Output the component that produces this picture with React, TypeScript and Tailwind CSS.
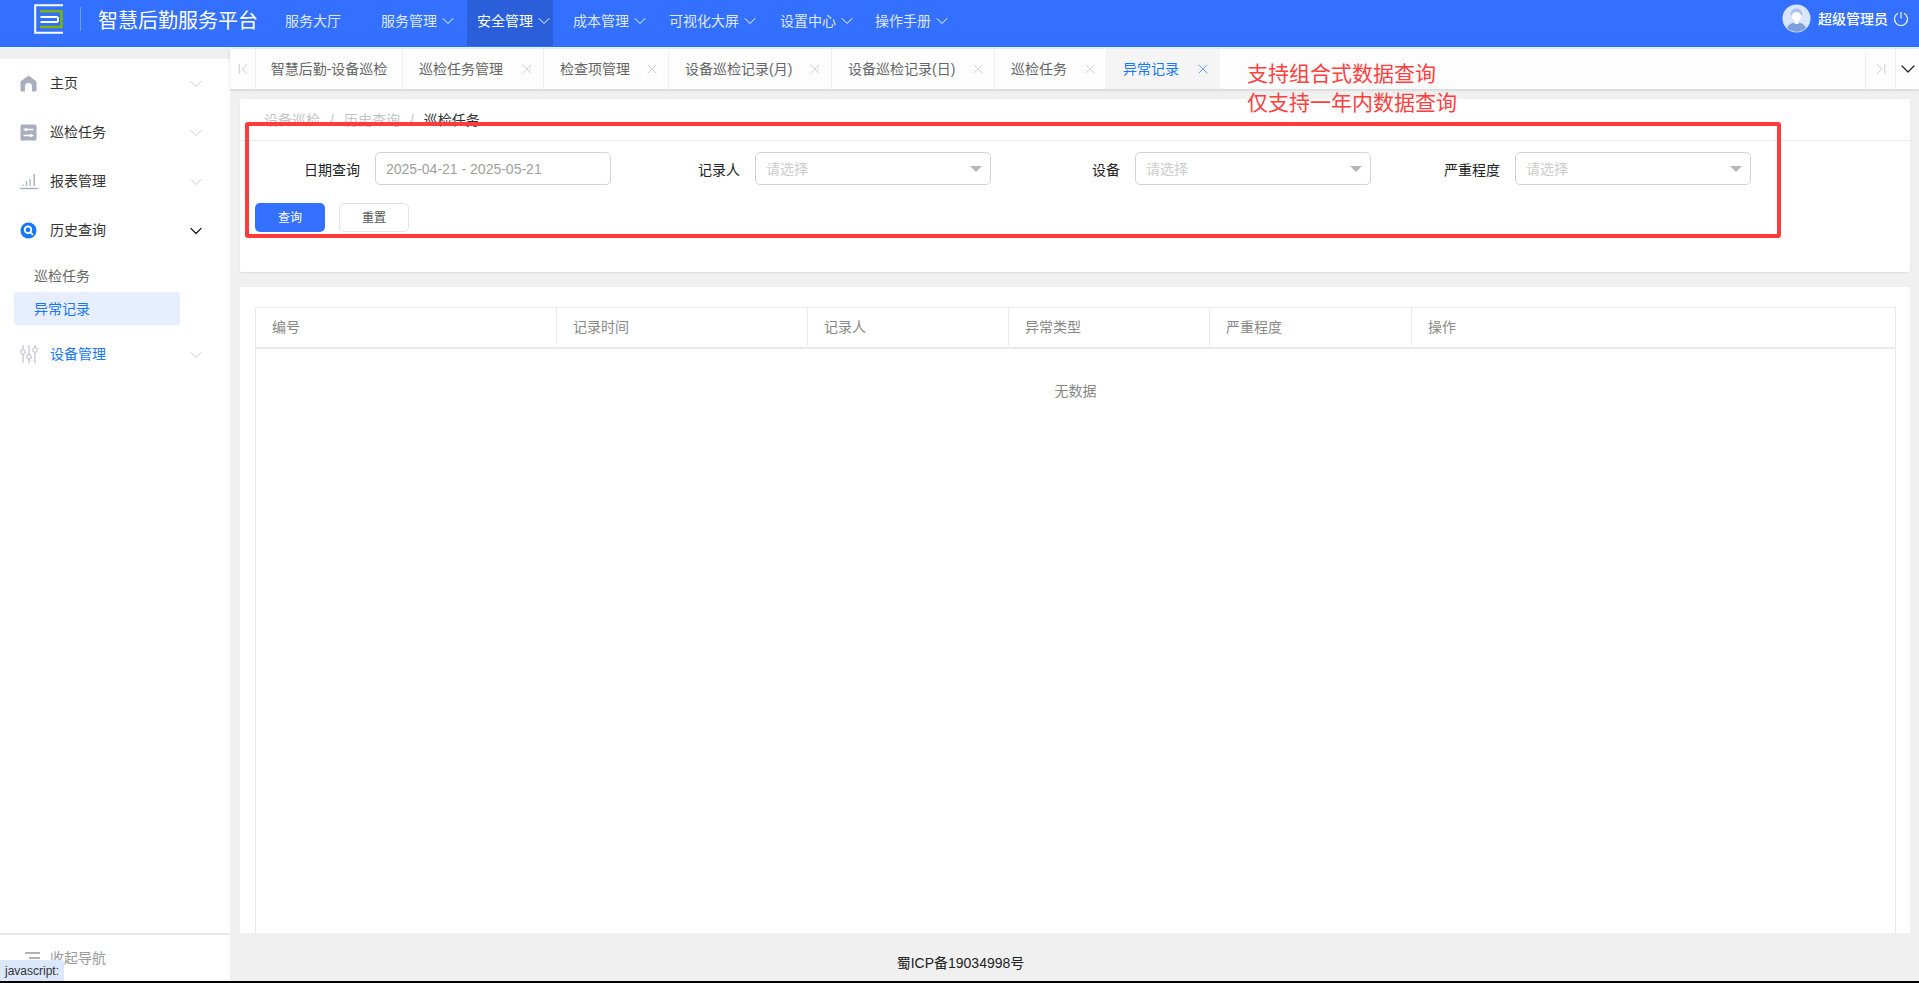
import { ChevronDown, ChevronFirst, ChevronLast, X } from "lucide-react";

const navItems = [
  { label: "服务大厅", box: "w-[96px]", arrow: false, active: false },
  { label: "服务管理", box: "w-[86px]", arrow: true, active: false },
  { label: "安全管理", box: "w-[86px] pl-[10px]", arrow: true, active: true },
  { label: "成本管理", box: "w-[116px] pl-[20px]", arrow: true, active: false },
  { label: "可视化大屏", box: "w-[111px]", arrow: true, active: false },
  { label: "设置中心", box: "w-[95px]", arrow: true, active: false },
  { label: "操作手册", box: "w-[96px]", arrow: true, active: false },
];

const tabs = [
  { label: "巡检任务管理", width: "w-[141px]" },
  { label: "检查项管理", width: "w-[125px]" },
  { label: "设备巡检记录(月)", width: "w-[163px]" },
  { label: "设备巡检记录(日)", width: "w-[163px]" },
  { label: "巡检任务", width: "w-[112px]" },
];

const filters = [
  { label: "日期查询", value: "2025-04-21 - 2025-05-21" },
  { label: "记录人" },
  { label: "设备" },
  { label: "严重程度" },
];

const columns = ["编号", "记录时间", "记录人", "异常类型", "严重程度", "操作"];

function Logo() {
  return (
    <svg width="30" height="30" viewBox="0 0 30 30" fill="none" className="ml-[34px] mt-[4px] shrink-0 self-start">
      <path d="M29 1.200H1.200V28.800H29" stroke="#fff" strokeWidth="2" />
      <path d="M6 7.200H27.500V23H6" stroke="#7cb305" strokeWidth="2.600" />
      <path d="M24 13H6.500M24 18H6.500M24 13V18" stroke="#fff" strokeWidth="1.800" />
    </svg>
  );
}

function Avatar() {
  return (
    <svg width="29" height="29" viewBox="0 0 29 29" className="shrink-0">
      <circle cx="14.5" cy="14.5" r="14" fill="#d9e5fb" />
      <path d="M5 24c1.5-4 5-5.5 9.5-5.5S22.500 20 24 24a14 14 0 0 1-19 0Z" fill="#7d9fdc" />
      <path d="M8.500 11c0-4 2.500-6.500 6-6.500s6 2.500 6 6.500h-1.500c0-1-9-1-9 0Z" fill="#a9c0ea" />
      <circle cx="14.500" cy="12.500" r="4.500" fill="#fff" />
      <rect x="12.500" y="15" width="4" height="5" fill="#fff" />
    </svg>
  );
}

function PowerIcon() {
  return (
    <svg width="16" height="16" viewBox="0 0 16 16" fill="none" stroke="#fff" strokeWidth="1.100" className="ml-[5px] shrink-0">
      <path d="M5 2.300a6.500 6.500 0 1 0 6 0" />
      <path d="M8 1v6.500" />
    </svg>
  );
}

function HomeIcon() {
  return (
    <svg width="17" height="17" viewBox="0 0 17 17" className="shrink-0">
      <path d="M8.500 0.500 16.500 6.500V15.500a1 1 0 0 1-1 1H12V11.500a3.500 3.500 0 0 0-7 0V16.500H1.500a1 1 0 0 1-1-1V6.500Z" fill="#a9aebf" />
    </svg>
  );
}

function TaskIcon() {
  return (
    <svg width="17" height="17" viewBox="0 0 17 17" className="shrink-0">
      <rect x="0.500" y="0.500" width="16" height="16" rx="1.500" fill="#a9aebf" />
      <path d="M3.500 5.500h10M3.500 11.500h10" stroke="#fff" strokeWidth="1.300" />
      <circle cx="6" cy="5.500" r="1.500" fill="#fff" />
      <circle cx="11" cy="11.500" r="1.500" fill="#fff" />
    </svg>
  );
}

function ReportIcon() {
  return (
    <svg width="18" height="17" viewBox="0 0 18 17" className="shrink-0">
      <path d="M0 15.500h18" stroke="#a9aebf" strokeWidth="1.400" />
      <path d="M2.500 13h1.200v-1.500H2.500ZM6 13h1.200V8H6ZM9.500 13h1.200V6H9.500ZM13.500 13h1.400V1h-1.400Z" fill="#a9aebf" />
    </svg>
  );
}

function SearchIcon() {
  return (
    <svg width="17" height="17" viewBox="0 0 17 17" className="shrink-0">
      <circle cx="8.500" cy="8.500" r="8" fill="#1677ff" />
      <circle cx="8" cy="7.800" r="3.300" fill="none" stroke="#fff" strokeWidth="1.800" />
      <path d="M10.500 10.300 13 12.800" stroke="#fff" strokeWidth="1.800" />
    </svg>
  );
}

function DeviceIcon() {
  return (
    <svg width="18" height="18" viewBox="0 0 18 18" fill="none" stroke="#a9aebf" strokeWidth="0.900" className="shrink-0">
      <path d="M3 0v4.500M3 9v9M9 0v9.500M9 14v4M15 0v2.500M15 7.500V18" />
      <circle cx="3" cy="7" r="2.300" />
      <circle cx="9" cy="11.800" r="2.300" />
      <circle cx="15" cy="5" r="2.300" />
    </svg>
  );
}

function MenuRow({ icon, label, blue, open }: { icon: React.ReactNode; label: string; blue?: boolean; open?: boolean }) {
  return (
    <div className="flex h-[49px] items-center pl-[20px] pr-[24px]">
      <span className="flex w-[30px] shrink-0 items-center pb-px">{icon}</span>
      <span className={`flex-1 pb-[2px] text-sm ${blue ? "text-[#1677ff]" : "text-[#333]"}`}>{label}</span>
      <ChevronDown
        size={20}
        strokeWidth={open ? 1.500 : 0.900}
        className={open ? "text-[#222]" : "text-[#b8b8b8]"}
      />
    </div>
  );
}

function Header() {
  return (
    <header className="flex h-[47px] shrink-0 items-stretch border-b border-[#1677ff] bg-[#3370ff] text-white">
      <Logo />
      <span className="ml-[16px] mt-[7px] h-[24px] w-px self-start bg-[#6e9bff]" />
      <span className="ml-[17px] w-[187px] self-center pb-[4px] text-[20px] leading-none">智慧后勤服务平台</span>
      <nav className="flex items-stretch">
        {navItems.map((item) => (
          <div
            key={item.label}
            className={`flex ${item.box} items-center gap-px whitespace-nowrap pb-[5px] text-sm ${item.active ? "bg-[#2a5fd9] text-white" : "text-[#dde7ff]"}`}
          >
            {item.label}
            {item.arrow && <ChevronDown size={20} strokeWidth={1.200} className="shrink-0 text-white" />}
          </div>
        ))}
      </nav>
      <div className="ml-auto mr-[10px] flex items-center pb-[9px]">
        <Avatar />
        <span className="ml-[7px] text-sm font-medium">超级管理员</span>
        <PowerIcon />
      </div>
    </header>
  );
}

function Sidebar() {
  return (
    <aside className="flex w-[230px] shrink-0 flex-col pt-[12px]">
      <div className="flex flex-1 flex-col bg-white">
        <MenuRow icon={<HomeIcon />} label="主页" />
        <MenuRow icon={<TaskIcon />} label="巡检任务" />
        <MenuRow icon={<ReportIcon />} label="报表管理" />
        <MenuRow icon={<SearchIcon />} label="历史查询" open />
        <div className="mb-[5px] mt-[4px] flex flex-col px-[14px] text-sm">
          <div className="flex h-[33px] items-center pl-[20px] text-[#666]">巡检任务</div>
          <div className="flex h-[33px] w-[166px] items-center rounded-[3px] bg-[#e6eeff] pl-[20px] text-[#1677ff]">
            异常记录
          </div>
        </div>
        <MenuRow icon={<DeviceIcon />} label="设备管理" blue />
        <div className="mt-auto flex h-[48px] items-center border-t-2 border-[#e8e8e8] pl-[25px] text-sm text-[#999]">
          <svg width="15" height="12" viewBox="0 0 15 12" stroke="#999" strokeWidth="1.500" className="mr-[10px]">
            <path d="M0 1h15M4 6h11M0 11h15" />
          </svg>
          收起导航
        </div>
      </div>
    </aside>
  );
}

function TabBar() {
  return (
    <div className="flex h-[40px] shrink-0 items-stretch bg-[#fdfdfd] text-sm text-[#666] shadow-[0_1px_3px_rgba(0,0,0,0.15)]">
      <div className="flex w-[26px] items-center justify-center border-r border-[#f0f0f0] text-[#bbb]">
        <ChevronFirst size={18} strokeWidth={1} />
      </div>
      <div className="flex w-[147px] items-center justify-center border-r border-[#f0f0f0]">智慧后勤-设备巡检</div>
      {tabs.map((tab) => (
        <div key={tab.label} className={`flex ${tab.width} items-center justify-between border-r border-[#f0f0f0] pl-4 pr-[8px]`}>
          {tab.label}
          <X size={16} strokeWidth={1} className="text-[#bbb]" />
        </div>
      ))}
      <div className="flex w-[113px] items-center justify-between bg-[#f5f5f5] pl-4 pr-[9px] text-[#1677ff]">
        异常记录
        <X size={16} strokeWidth={1} />
      </div>
      <div className="ml-auto flex w-[30px] items-center justify-center border-l border-[#f0f0f0] text-[#bbb]">
        <ChevronLast size={18} strokeWidth={1} />
      </div>
      <div className="flex w-[24px] items-center justify-center border-l border-[#f0f0f0] text-[#222]">
        <ChevronDown size={24} strokeWidth={1.200} className="shrink-0" />
      </div>
    </div>
  );
}

function FilterCard() {
  return (
    <section className="h-[173px] shrink-0 rounded-[2px] bg-white shadow-[0_1px_2px_rgba(0,0,0,0.08)]">
      <div className="flex h-[42px] items-center gap-[10px] border-b border-[#eaeaea] pl-[24px] text-sm text-[#c4c4c4]">
        <span>设备巡检</span>
        <span>/</span>
        <span>历史查询</span>
        <span>/</span>
        <span className="text-[#333]">巡检任务</span>
      </div>
      <div className="flex pl-[15px] pt-[11px]">
        {filters.map((filter) => (
          <div key={filter.label} className="flex w-[380px] items-center">
            <span className="w-[105px] pt-[3px] text-right text-sm text-[#222]">{filter.label}</span>
            <div className="ml-[15px] flex h-[33px] w-[236px] items-center justify-between rounded-[5px] border border-[#d0d4d9] pl-[10px] pr-[8px] text-sm">
              {filter.value ? (
                <span className="text-[#a0a0a0]">{filter.value}</span>
              ) : (
                <>
                  <span className="text-[#ccc]">请选择</span>
                  <span className="h-0 w-0 border-x-[6px] border-t-[6px] border-x-transparent border-t-[#b5b5b5]" />
                </>
              )}
            </div>
          </div>
        ))}
      </div>
      <div className="flex gap-[14px] pl-[15px] pt-[18px] text-xs">
        <button className="flex h-[29px] w-[70px] items-center justify-center rounded-[5px] bg-[#3370ff] text-white">查询</button>
        <button className="flex h-[29px] w-[70px] items-center justify-center rounded-[5px] border border-[#e4e4e4] text-[#555]">重置</button>
      </div>
    </section>
  );
}

function RecordTable() {
  return (
    <section className="mt-[15px] flex min-h-0 flex-1 flex-col rounded-t-[2px] bg-white pl-[15px] pr-[14px] pt-[20px]">
      <div className="flex-1 border-x border-t border-[#e8e8e8]">
        <div className="grid h-[41px] grid-cols-[301px_251px_201px_201px_202px_1fr] border-b-2 border-[#eaeaea] pb-px text-sm text-[#888]">
          {columns.map((col, i) => (
            <div key={col} className={`flex items-center pl-4 ${i < columns.length - 1 ? "border-r border-[#eaeaea]" : ""}`}>
              {col}
            </div>
          ))}
        </div>
        <div className="pt-[32px] text-center text-sm leading-[20px] text-[#888]">无数据</div>
      </div>
    </section>
  );
}

export default function App() {
  return (
    <div className="relative flex h-[983px] w-full flex-col overflow-hidden bg-[#f0f0f0] font-[family-name:'Liberation_Sans','Noto_Sans_CJK_SC',sans-serif]">
      <Header />
      <div className="flex min-h-0 flex-1">
        <Sidebar />
        <main className="flex min-w-0 flex-1 flex-col pt-[2px]">
          <TabBar />
          <div className="flex min-h-0 flex-1 flex-col pl-[10px] pr-[9px] pt-[10px]">
            <FilterCard />
            <RecordTable />
          </div>
          <footer className="flex h-[48px] shrink-0 items-center justify-center pr-[228px] pt-[12px] text-sm text-[#222]">
            蜀ICP备19034998号
          </footer>
        </main>
      </div>
      <div className="h-[2px] shrink-0 bg-black" />

      {/* annotations drawn on top of the screenshot */}
      <div className="absolute left-[245px] top-[122px] h-[116px] w-[1536px] rounded-[3px] border-4 border-[#ff3b3b]" />
      <div className="absolute left-[1247px] top-[59px] text-[21px] leading-[29px] text-[#ff4040]">
        <div>支持组合式数据查询</div>
        <div>仅支持一年内数据查询</div>
      </div>
      {/* browser status bubble */}
      <div className="absolute bottom-[2px] left-0 flex h-[21px] items-center rounded-tr-[3px] bg-[#dbe7fb] px-[5px] text-xs text-[#333]">
        javascript:
      </div>
    </div>
  );
}
